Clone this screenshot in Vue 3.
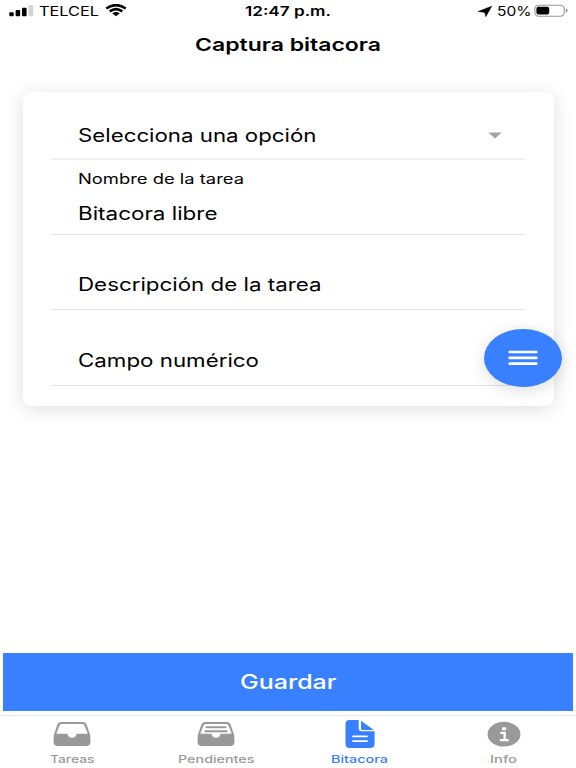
<script setup>
import { h } from 'vue'

// Wide-set label: real text fitted to a given width, on a given baseline.
const Label = (p) =>
  h('svg', { width: p.w, height: p.h, class: 'label', overflow: 'visible', style: { display: 'block' } }, [
    h('text', {
      x: 0,
      y: p.base,
      'font-size': p.size,
      'font-weight': p.weight || 400,
      fill: 'currentColor',
      textLength: p.w,
      lengthAdjust: 'spacingAndGlyphs',
    }, p.t),
  ])
Label.props = ['t', 'w', 'h', 'base', 'size', 'weight']

const tabs = [
  { name: 'Tareas', w: 44.5, icon: 'tray' },
  { name: 'Pendientes', w: 76.5, icon: 'full' },
  { name: 'Bitacora', w: 57, icon: 'doc', active: true },
  { name: 'Info', w: 27, icon: 'info' },
]
</script>

<template>
  <div class="screen">
    <header class="status">
      <div class="left">
        <svg class="signal" width="25" height="14" viewBox="0 0 25 14">
          <rect x="0.3" y="8.2" width="4.4" height="4" rx="1" />
          <rect x="6.6" y="6" width="4.6" height="6.2" rx="1" />
          <rect x="13" y="3.8" width="4.6" height="8.4" rx="1" />
          <rect x="19.6" y="1.2" width="4.6" height="11" rx="1" fill="#d2d2d2" />
        </svg>
        <Label t="TELCEL" :w="60" :h="20" :base="16" :size="13" />
        <svg class="wifi" width="22" height="13" viewBox="0 0 22 13">
          <path d="M1.3 4.5Q11 -2.3 20.7 4.5" />
          <path d="M4.7 7.4Q11 2.9 17.3 7.4" />
          <path class="solid" d="M7.2 9.3Q11 6.8 14.8 9.3L11 12.2Z" />
        </svg>
      </div>
      <Label t="12:47 p.m." :w="86" :h="20" :base="16" :size="13" :weight="600" />
      <div class="right">
        <svg width="14" height="11" viewBox="0 0 14 11"><path d="M13.7 0.2L7.8 10.7L6.8 6.4L0.1 5.5Z" stroke="#000" stroke-width=".5" /></svg>
        <Label class="pct" t="50%" :w="34.5" :h="20" :base="16" :size="13" />
        <svg class="battery" width="35" height="14" viewBox="0 0 35 14">
          <rect x="0.9" y="1.2" width="29.3" height="11" rx="3.6" fill="none" stroke="#999" stroke-width="1.1" />
          <rect x="2.4" y="2.8" width="12.8" height="7.8" rx="2" />
          <path d="M31.8 4.8Q33.8 5.5 33.8 6.7Q33.8 7.9 31.8 8.7Z" fill="#999" />
        </svg>
      </div>
    </header>
    <h1 class="title"><Label t="Captura bitacora" :w="186" :h="24" :base="18.5" :size="17.7" :weight="600" /></h1>

    <main class="content">
      <section class="card">
        <div class="row select">
          <Label t="Selecciona una opción" :w="238.5" :h="24" :base="18" :size="18.2" />
          <svg class="caret" width="14" height="7" viewBox="0 0 14 7"><path d="M0.2 0.6H13.8L7 6.4Z" /></svg>
        </div>
        <div class="row filled">
          <Label t="Nombre de la tarea" :w="166" :h="20" :base="15.4" :size="14.2" />
          <Label t="Bitacora libre" :w="139.5" :h="24" :base="19.5" :size="18.2" />
        </div>
        <div class="row empty"><Label t="Descripción de la tarea" :w="243.5" :h="24" :base="18.3" :size="18.2" /></div>
        <div class="row empty"><Label t="Campo numérico" :w="181" :h="24" :base="18.7" :size="18.2" /></div>
        <button class="fab" aria-label="Menú">
          <svg width="30" height="16" viewBox="0 0 30 16"><path d="M1.7 2H28.3M1.7 7.9H28.3M1.7 13.7H28.3" /></svg>
        </button>
      </section>
    </main>

    <button class="save"><Label t="Guardar" :w="96.5" :h="26" :base="20.2" :size="20.3" :weight="500" /></button>

    <nav class="tabs">
      <a v-for="tab in tabs" :key="tab.name" class="tab" :class="{ active: tab.active }">
        <svg v-if="tab.icon === 'tray' || tab.icon === 'full'" width="38" height="28" viewBox="0 0 38 28">
          <path fill-rule="evenodd" d="M8.5 2H29.5Q32.8 2 33.8 5L37 14.5Q37.4 15.7 37.4 17V22Q37.4 26 33.4 26H4.6Q.6 26 .6 22V17Q.6 15.7 1 14.5L4.2 5Q5.2 2 8.5 2ZM8.9 4.1Q7 4.1 6.4 5.8L3.3 13.8H14.5Q15 17.8 19 17.8Q23 17.8 23.5 13.8H34.7L31.6 5.8Q31 4.1 29.1 4.1Z" />
          <path v-if="tab.icon === 'full'" class="papers" d="M9.7 7.3H28.5M8.4 11.2H29.6" />
        </svg>
        <svg v-else-if="tab.icon === 'doc'" width="30" height="28" viewBox="0 0 30 28">
          <path d="M4.8 0H13.7V8Q13.7 11.3 17 11.3H29.6V24Q29.6 28 25 28H4.8Q.5 28 .5 24V4Q.5 0 4.8 0Z" />
          <path d="M16 .8L28.8 9.9H17.5Q16 9.9 16 8.4Z" />
          <path class="lines" d="M8 16.4H22M8 21.2H22" />
        </svg>
        <svg v-else width="34" height="28" viewBox="0 0 34 28">
          <ellipse cx="17" cy="14.2" rx="16.4" ry="12.4" />
          <ellipse class="cut" cx="17.1" cy="8.8" rx="2.3" ry="1.7" />
          <path class="mark" d="M13.3 12.9H17.6V20M12.9 20.1H21.6" />
        </svg>
        <Label :t="tab.name" :w="tab.w" :h="14" :base="10.5" :size="10.7" :weight="500" />
      </a>
    </nav>
  </div>
</template>

<style>
body { margin: 0; background: #fff; }
</style>

<style scoped>
.screen {
  width: 576px;
  height: 768px;
  display: flex;
  flex-direction: column;
  overflow: hidden;
  background: #fff;
  color: #000;
  font-family: Inter, "Liberation Sans", sans-serif;
}
svg { flex: none; }
button { border: 0; padding: 0; font: inherit; }
.status { height: 24px; flex: none; display: grid; grid-template-columns: 1fr 87px 1fr; align-items: start; }
.left { display: flex; padding-left: 9px; }
.signal { margin: 4px 5px 0 0; }
.wifi { margin: 4px 0 0 6px; fill: none; stroke: #000; stroke-width: 2.6; }
.wifi .solid { fill: #000; stroke: none; }
.right { display: flex; justify-content: flex-end; padding-right: 7px; }
.right > svg:first-child { margin: 6px 5px 0 0; }
.battery { margin: 4px 0 0 3px; }
.title { height: 26px; flex: none; margin: 8px 0 0; display: flex; justify-content: center; }
.content { flex: 1; padding: 34px 22.5px 0; }
.card {
  position: relative;
  box-sizing: border-box;
  height: 314px;
  padding: 0 27.5px;
  border-radius: 10px / 8px;
  background: #fff;
  box-shadow: 0 3px 20px rgba(0, 0, 0, 0.13);
}
.row { box-sizing: border-box; padding-left: 28px; border-bottom: 1px solid #e6e6e6; }
.select { height: 68px; padding-top: 32px; padding-right: 24.5px; display: flex; justify-content: space-between; border-bottom: 2px solid #f2f2f2; }
.caret { margin-top: 8px; fill: #a3a3a3; }
.filled { height: 75px; padding-top: 9px; display: flex; flex-direction: column; gap: 11px; }
.empty { height: 75.3px; padding-top: 38px; }
.fab {
  position: absolute;
  right: -8.5px;
  top: 236.5px;
  width: 78px;
  height: 58.5px;
  border-radius: 50%;
  display: flex;
  align-items: center;
  justify-content: center;
  background: #3880ff;
  box-shadow: 0 3px 16px rgba(0, 0, 0, 0.14);
}
.fab path { stroke: #fff; stroke-width: 2.7; stroke-linecap: round; fill: none; }
.save {
  flex: none;
  height: 58px;
  margin: 0 3px 4px;
  display: flex;
  align-items: center;
  justify-content: center;
  background: #3880ff;
  color: #fff;
}
.tabs { height: 53px; box-sizing: border-box; flex: none; display: grid; grid-template-columns: repeat(4, 143.75px); justify-content: center; border-top: 1px solid #e8e8e8; }
.tab { display: flex; flex-direction: column; align-items: center; gap: 4px; padding-top: 4px; color: #999; }
.tab.active { color: #3880ff; }
.tab > svg { fill: currentColor; }
.papers { stroke: currentColor; stroke-width: 2.1; stroke-linecap: round; }
.lines { stroke: #fff; stroke-width: 1.8; stroke-linecap: round; }
.cut { fill: #fff; }
.mark { fill: none; stroke: #fff; stroke-width: 2.4; }
</style>
